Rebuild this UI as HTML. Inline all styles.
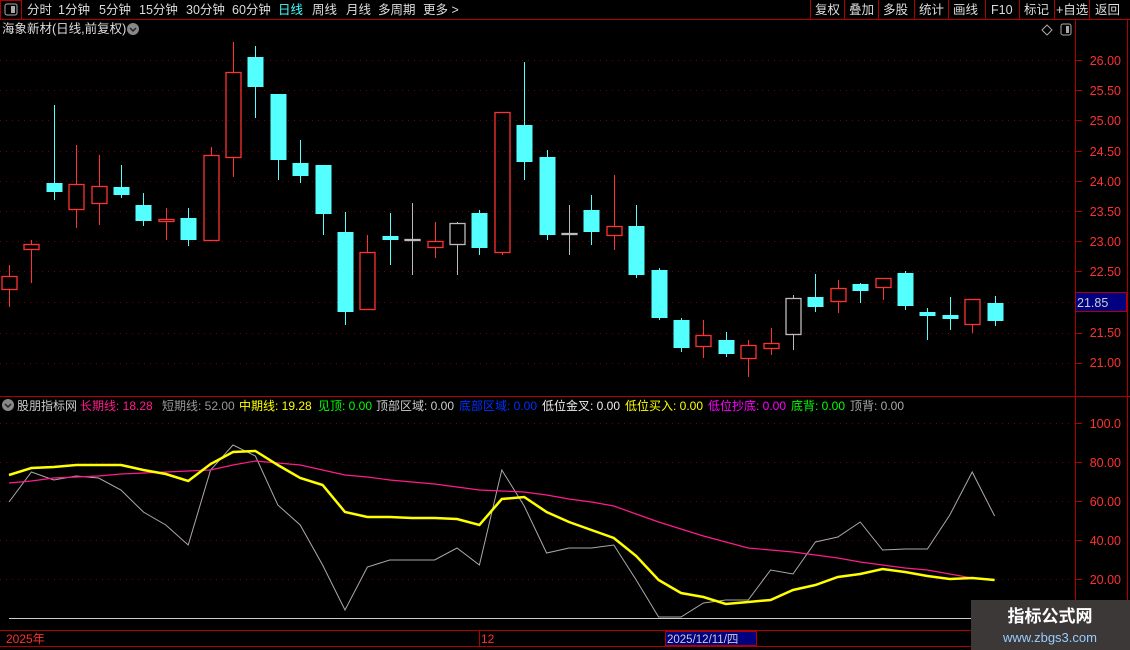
<!DOCTYPE html>
<html><head><meta charset="utf-8">
<style>
html,body{margin:0;padding:0;background:#000;width:1130px;height:650px;overflow:hidden;font-family:"Liberation Sans","Noto Sans CJK SC",sans-serif;}
svg{position:absolute;left:0;top:0}
</style></head><body>
<svg id="s" width="1130" height="650" xmlns="http://www.w3.org/2000/svg" font-family="Liberation Sans, Noto Sans CJK SC, sans-serif" font-size="12">
<rect x="0" y="0" width="1130" height="19" fill="#000"/>
<line x1="0" y1="19.5" x2="1130" y2="19.5" stroke="#b00000"/>
<rect x="0.5" y="0.5" width="21" height="19" fill="none" stroke="#b00000"/>
<rect x="5" y="4" width="12" height="11" rx="2" fill="none" stroke="#aaa"/><rect x="11" y="6" width="4" height="7" fill="#aaa"/>
<g fill="#ddd" font-size="12.5">
<text x="27" y="14">分时</text><text x="58" y="14">1分钟</text><text x="99" y="14">5分钟</text><text x="139" y="14">15分钟</text><text x="186" y="14">30分钟</text><text x="232" y="14">60分钟</text>
<text x="278" y="14" fill="#4ff">日线</text><text x="312" y="14">周线</text><text x="346" y="14">月线</text><text x="378" y="14">多周期</text><text x="423" y="14">更多 &gt;</text>
</g>
<g stroke="#b00000" fill="none">
<line x1="810.5" y1="0" x2="810.5" y2="19"/><line x1="844.5" y1="0" x2="844.5" y2="19"/><line x1="878.5" y1="0" x2="878.5" y2="19"/><line x1="914.5" y1="0" x2="914.5" y2="19"/><line x1="948.5" y1="0" x2="948.5" y2="19"/><line x1="985.5" y1="0" x2="985.5" y2="19"/><line x1="1019.5" y1="0" x2="1019.5" y2="19"/><line x1="1054.5" y1="0" x2="1054.5" y2="19"/><line x1="1089.5" y1="0" x2="1089.5" y2="19"/>
</g>
<g fill="#ddd" font-size="12.5">
<text x="815" y="14">复权</text><text x="849" y="14">叠加</text><text x="883" y="14">多股</text><text x="919" y="14">统计</text><text x="953" y="14">画线</text><text x="991" y="14">F10</text><text x="1024" y="14">标记</text><text x="1056" y="14">+自选</text><text x="1095" y="14">返回</text>
</g>
<text x="2" y="33" fill="#ddd" font-size="12.5">海象新材(日线,前复权)</text>
<circle cx="133" cy="29" r="6" fill="#888"/><path d="M130 28l3 3 3-3" stroke="#222" stroke-width="1.5" fill="none"/>
<path d="M1047 25l5 5-5 5-5-5z" fill="none" stroke="#aaa"/>
<rect x="1061" y="24" width="10" height="11" rx="2" fill="none" stroke="#aaa"/><rect x="1066" y="26" width="3" height="7" fill="#aaa"/>
<line x1="1075.5" y1="19" x2="1075.5" y2="630" stroke="#b00000"/>
<line x1="1127.5" y1="19" x2="1127.5" y2="630" stroke="#b00000"/>
<line x1="0" y1="396.5" x2="1130" y2="396.5" stroke="#b00000"/>
<g id="grid"></g>
<g id="cand"></g>
<g fill="#ff3030" font-size="12.5" text-anchor="end">
<text x="1121" y="65">26.00</text><text x="1121" y="95">25.50</text><text x="1121" y="125">25.00</text><text x="1121" y="156">24.50</text><text x="1121" y="186">24.00</text><text x="1121" y="216">23.50</text><text x="1121" y="246">23.00</text><text x="1121" y="276">22.50</text><text x="1121" y="337">21.50</text><text x="1121" y="367">21.00</text>
<text x="1121" y="428">100.0</text><text x="1121" y="467">80.00</text><text x="1121" y="506">60.00</text><text x="1121" y="545">40.00</text><text x="1121" y="584">20.00</text>
</g>
<rect x="1075.5" y="292.5" width="51" height="19" fill="#000080" stroke="#b00000"/>
<text x="1077" y="307" fill="#ccc" font-size="12.5">21.85</text>
<circle cx="8" cy="405" r="6" fill="#888"/><path d="M5 404l3 3 3-3" stroke="#222" stroke-width="1.5" fill="none"/>
<g font-size="12">
<text x="17" y="410" fill="#ccc">股朋指标网</text>
<text x="80" y="410" fill="#ff1c8c">长期线: 18.28</text>
<text x="162" y="410" fill="#999">短期线: 52.00</text>
<text x="239" y="410" fill="#ff0">中期线: 19.28</text>
<text x="318" y="410" fill="#0f0">见顶: 0.00</text>
<text x="376" y="410" fill="#ccc">顶部区域: 0.00</text>
<text x="459" y="410" fill="#0030ff">底部区域: 0.00</text>
<text x="542" y="410" fill="#eee">低位金叉: 0.00</text>
<text x="625" y="410" fill="#ff0">低位买入: 0.00</text>
<text x="708" y="410" fill="#f0f">低位抄底: 0.00</text>
<text x="791" y="410" fill="#0f0">底背: 0.00</text>
<text x="850" y="410" fill="#aaa">顶背: 0.00</text>
</g>
<g id="ind"></g>
<line x1="9" y1="618.5" x2="975" y2="618.5" stroke="#ccc"/>
<line x1="0" y1="630.5" x2="1130" y2="630.5" stroke="#b00000"/>
<line x1="0" y1="646.5" x2="1130" y2="646.5" stroke="#b00000"/>
<line x1="479.5" y1="630" x2="479.5" y2="646" stroke="#b00000"/>
<text x="6" y="643" fill="#ff3030" font-size="12">2025年</text>
<text x="481" y="643" fill="#ff3030" font-size="12">12</text>
<rect x="665.5" y="631.5" width="91" height="14" fill="#000080" stroke="#b00000"/>
<text x="667" y="643" fill="#ccc" font-size="11.5">2025/12/11/四</text>
<rect x="971" y="600" width="159" height="50" fill="#3c3838"/>
<text x="1050" y="622" fill="#fff" font-size="17" font-weight="bold" text-anchor="middle">指标公式网</text>
<text x="1050" y="642" fill="#9cf" font-size="13" text-anchor="middle">www.zbgs3.com</text>
</svg>
<script>
var NS="http://www.w3.org/2000/svg";
function el(p,t,a){var e=document.createElementNS(NS,t);for(var k in a)e.setAttribute(k,a[k]);p.appendChild(e);return e;}
var g=document.getElementById('grid');
[60,90,120,151,181,211,241,271,302,333,363,423,462,501,540,579].forEach(function(y){el(g,'line',{x1:0,x2:1075,y1:y+.5,y2:y+.5,stroke:'#700000','stroke-dasharray':'1 5'});el(g,'line',{x1:1075,x2:1082,y1:y+.5,y2:y+.5,stroke:'#b00000'});});
var C=[['r',276,290,265,307],['r',244,250,240,283],['c',183,192,105,200],['r',184,210,145,228],['r',186,204,155,225],['c',187,195,165,198],['c',205,221,193,226],['r',219,222,208,240],['c',218,240,208,246],['r',155,241,147,241],['r',72,158,42,177],['c',57,87,46,118],['c',94,160,94,180],['c',163,176,140,183],['c',165,214,165,235],['c',232,312,212,325],['r',252,310,235,310],['c',236,240,213,265],['w',239,241,203,275],['r',241,248,222,258],['w',223,245,222,275],['c',213,248,210,255],['r',112,253,112,255],['c',125,162,62,180],['c',157,235,150,240],['w',233,234,205,255],['c',210,232,195,245],['r',226,236,175,250],['c',226,275,205,278],['c',270,318,268,320],['c',320,348,318,352],['r',335,347,320,358],['c',340,354,332,357],['r',345,359,340,377],['r',343,349,328,355],['w',298,335,295,350],['c',297,307,274,312],['r',288,302,280,313],['c',284,291,283,303],['r',278,288,278,300],['c',273,306,271,310],['c',312,316,308,340],['c',315,319,297,330],['r',299,325,299,333],['c',303,321,296,326]];
var cg=document.getElementById('cand');
C.forEach(function(c,i){var x=Math.round(9+i*22.4)+.5;var col=c[0]=='r'?'#ff3232':c[0]=='c'?'#54ffff':'#bbb';
el(cg,'line',{x1:x,x2:x,y1:c[3],y2:c[1],stroke:col});el(cg,'line',{x1:x,x2:x,y1:c[2],y2:c[4],stroke:col});
var h=Math.max(c[2]-c[1],1);
if(c[0]=='c')el(cg,'rect',{x:x-8,y:c[1],width:16,height:h,fill:col});
else el(cg,'rect',{x:x-7.5,y:c[1]+.5,width:15,height:Math.max(h-1,1),fill:'none',stroke:col,'stroke-width':1.3});});
var ig=document.getElementById('ind');
function pl(arr,col,w){var p=arr.map(function(y,i){return (9+i*22.4)+','+y}).join(' ');el(ig,'polyline',{points:p,fill:'none',stroke:col,'stroke-width':w});}
var G=[502,472,480,476,478,490,512,525,545,470,445,456,505,525,565,610,567,560,560,560,548,565,470,506,553,548,548,545,580,617,617,603,600,600,570,574,542,537,522,550,549,549,515,472,516];
var M=[483,481,478,477,476,474,473,472,471,470,465,461,463,465,470,475,477,480,482,484,487,490,491,492,495,499,502,506,514,522,529,536,542,548,550,552,555,558,562,565,568,570,574,578,580];
var Y=[475,468,467,465,465,465,470,474,481,464,452,451,465,478,485,512,517,517,518,518,519,525,499,497,512,522,530,538,556,580,593,597,604,602,600,590,585,577,574,569,572,576,579,578,580];
pl(G,'#aaa',1);pl(M,'#ff1c8c',1.2);pl(Y,'#ffff00',2.5);
</script>
</body></html>
